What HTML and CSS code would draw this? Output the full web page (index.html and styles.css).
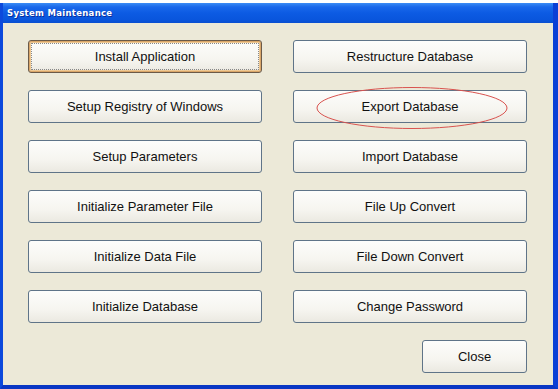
FILE: index.html
```html
<!DOCTYPE html>
<html lang="en">
<head>
  <meta charset="UTF-8" />
  <title>System Maintenance</title>
  <link rel="stylesheet" href="styles.css">
</head>
<body>
  <!-- Dialog window -->
  <div class="window">
    <div class="title-bar">System Maintenance</div>
    <div class="content">
      <div class="button-grid">
        <button class="btn focused">Install Application</button>
        <button class="btn">Restructure Database</button>
        <button class="btn">Setup Registry of Windows</button>
        <button class="btn marked">Export Database
          <svg class="mark" width="194" height="44" viewBox="0 0 194 44">
            <ellipse cx="97" cy="22" rx="95" ry="20.5" fill="none" stroke="#d9534f" stroke-width="1"/>
          </svg>
        </button>
        <button class="btn">Setup Parameters</button>
        <button class="btn">Import Database</button>
        <button class="btn">Initialize Parameter File</button>
        <button class="btn">File Up Convert</button>
        <button class="btn">Initialize Data File</button>
        <button class="btn">File Down Convert</button>
        <button class="btn">Initialize Database</button>
        <button class="btn">Change Password</button>
      </div>
      <div class="footer">
        <button class="btn close">Close</button>
      </div>
    </div>
  </div>
</body>
</html>
```

FILE: styles.css
```css
body {
  margin: 0;
  padding-top: 3px;
  background: #ffffff;
  font-family: "Liberation Sans", Arial, sans-serif;
}

/* Window frame */
.window {
  width: 558px;
  height: 386px;
  box-sizing: border-box;
  background: #0b3fd6;
  border-left: 3px solid #0c49dc;
  border-right: 5px solid #0b3fd6;
  border-bottom: 4px solid #0a37c4;
  display: flex;
  flex-direction: column;
}

.title-bar {
  height: 20px;
  line-height: 20px;
  padding-left: 4px;
  color: #ffffff;
  font-family: "DejaVu Sans", Verdana, sans-serif;
  font-size: 8.5px;
  font-weight: bold;
  letter-spacing: 0.3px;
  background: linear-gradient(#3b8cf5 0%, #1a68ea 20%, #0c5be3 50%, #0955dc 85%, #0a4fd0 100%);
  text-shadow: 1px 1px 0 #0a2f9c;
}

.content {
  flex: 1;
  background: #ece9d8;
  padding: 17px 26px 0 25px;
}

/* Buttons */
.button-grid {
  display: grid;
  grid-template-columns: 234px 234px;
  column-gap: 31px;
  row-gap: 17px;
}

.btn {
  position: relative;
  height: 33px;
  box-sizing: border-box;
  border: 1px solid #5f7488;
  border-radius: 3px;
  background: linear-gradient(#fdfdfb 0%, #f6f5f0 60%, #ebe9e1 100%);
  font-family: "Liberation Sans", Arial, sans-serif;
  font-size: 13px;
  color: #111111;
  padding: 0;
}

.btn.focused {
  border: 1px solid #6b5a48;
  box-shadow: inset 0 0 0 1px #d9a669, inset 0 0 0 2px #efc994;
  outline: 1px dotted #888;
  outline-offset: -4px;
}

.mark {
  position: absolute;
  left: 21px;
  top: -5px;
  pointer-events: none;
}

.footer {
  display: flex;
  justify-content: flex-end;
  margin-top: 17px;
}

.btn.close {
  width: 105px;
}
```
